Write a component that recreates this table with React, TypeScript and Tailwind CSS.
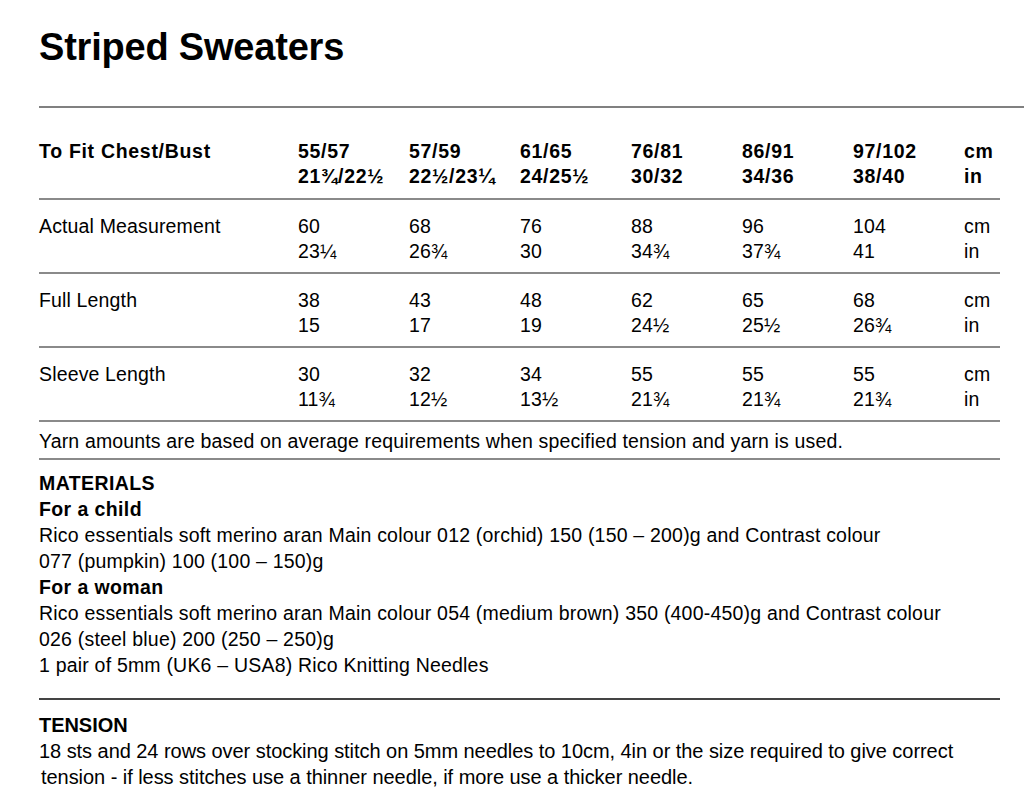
const sizes = [
  ['55/57', '21¾/22½'],
  ['57/59', '22½/23¼'],
  ['61/65', '24/25½'],
  ['76/81', '30/32'],
  ['86/91', '34/36'],
  ['97/102', '38/40'],
]

const rows = [
  {
    label: 'Actual Measurement',
    cm: ['60', '68', '76', '88', '96', '104'],
    inch: ['23¼', '26¾', '30', '34¾', '37¾', '41'],
  },
  {
    label: 'Full Length',
    cm: ['38', '43', '48', '62', '65', '68'],
    inch: ['15', '17', '19', '24½', '25½', '26¾'],
  },
  {
    label: 'Sleeve Length',
    cm: ['30', '32', '34', '55', '55', '55'],
    inch: ['11¾', '12½', '13½', '21¾', '21¾', '21¾'],
  },
]

const grid = 'grid grid-cols-[259px_repeat(6,111px)_1fr]'

export default function App() {
  return (
    <div className="w-[1024px] h-[802px] bg-white text-black font-['Liberation_Sans',Arial,sans-serif] overflow-hidden">
      <h1 className="pl-[39px] pt-[24px] text-[38px] leading-[46px] font-bold tracking-[-0.2px]">
        Striped Sweaters
      </h1>
      <div className="ml-[39px] mt-[36px] h-[2px] bg-[#808080]" />

      <div className="pl-[39px] pr-[24px] text-[19.5px] leading-[25px] tracking-[0.15px]">
        {/* header */}
        <div className={`${grid} pt-[31px] pb-[9px] font-bold tracking-[0.7px] border-b-2 border-[#8a8a8a]`}>
          <div>To Fit Chest/Bust</div>
          {sizes.map(([cm, inch]) => (
            <div key={cm}>
              <div>{cm}</div>
              <div>{inch}</div>
            </div>
          ))}
          <div>
            <div>cm</div>
            <div>in</div>
          </div>
        </div>

        {rows.map((r) => (
          <div key={r.label} className={`${grid} pt-[14px] pb-[8px] border-b-2 border-[#8a8a8a]`}>
            <div>{r.label}</div>
            {r.cm.map((v, i) => (
              <div key={i}>
                <div>{v}</div>
                <div>{r.inch[i]}</div>
              </div>
            ))}
            <div>
              <div>cm</div>
              <div>in</div>
            </div>
          </div>
        ))}

        <div className="pt-[6px] pb-[4px] leading-[26px] border-b-2 border-[#8a8a8a]">
          Yarn amounts are based on average requirements when specified tension and yarn is used.
        </div>

        <div className="pt-[10px] pb-[20px] leading-[26px] tracking-[0.2px] border-b-2 border-[#444]">
          <div className="font-bold tracking-[0.4px]">MATERIALS</div>
          <div className="font-bold tracking-[0.4px]">For a child</div>
          <div>
            Rico essentials soft merino aran Main colour 012 (orchid) 150 (150 – 200)g and Contrast colour
          </div>
          <div>077 (pumpkin) 100 (100 – 150)g</div>
          <div className="font-bold tracking-[0.4px]">For a woman</div>
          <div>
            Rico essentials soft merino aran Main colour 054 (medium brown) 350 (400-450)g and Contrast colour
          </div>
          <div>026 (steel blue) 200 (250 – 250)g</div>
          <div>1 pair of 5mm (UK6 – USA8) Rico Knitting Needles</div>
        </div>

        <div className="pt-[12px] leading-[26px] text-[20px] tracking-[-0.05px]">
          <div className="font-bold">TENSION</div>
          <div>
            18 sts and 24 rows over stocking stitch on 5mm needles to 10cm, 4in or the size required to give correct
          </div>
          <div className="pl-[2px]">tension - if less stitches use a thinner needle, if more use a thicker needle.</div>
        </div>
      </div>
    </div>
  )
}
